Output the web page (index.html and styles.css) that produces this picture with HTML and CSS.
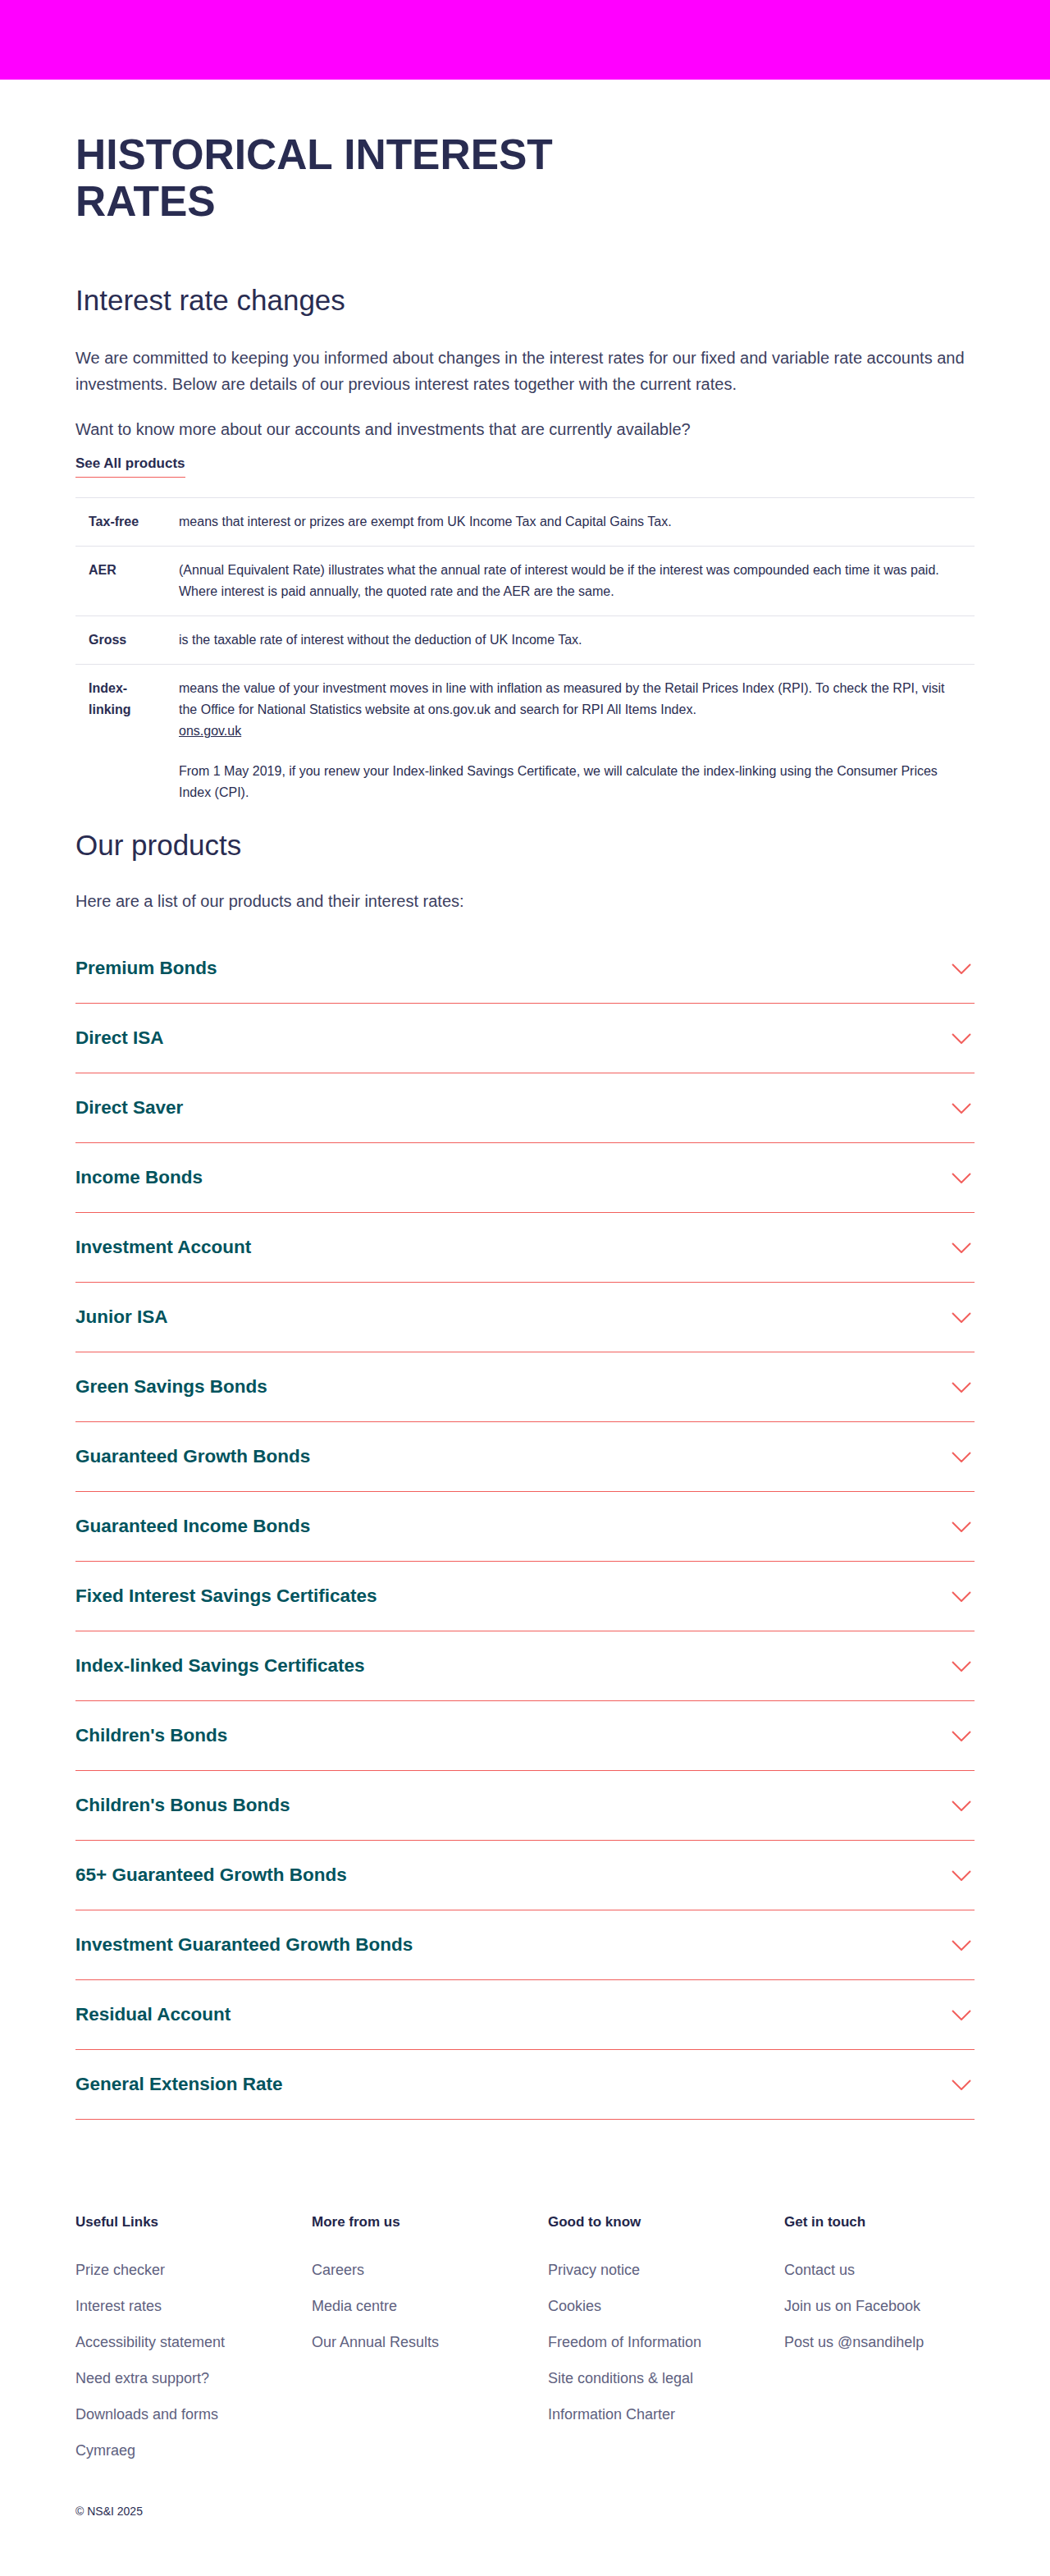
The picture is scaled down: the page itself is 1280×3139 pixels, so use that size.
FILE: index.html
```html
<!DOCTYPE html>
<html lang="en">
<head>
<meta charset="utf-8">
<title>Historical interest rates</title>
<link rel="stylesheet" href="styles.css">
</head>
<body>
<header class="topbar"></header>
<main class="wrap">
  <h1 class="page-title">HISTORICAL INTEREST RATES</h1>

  <h2 class="section-title first">Interest rate changes</h2>
  <p class="lead">We are committed to keeping you informed about changes in the interest rates for our fixed and variable rate accounts and investments. Below are details of our previous interest rates together with the current rates.</p>
  <p class="lead">Want to know more about our accounts and investments that are currently available?</p>
  <a class="cta" href="#">See All products</a>

  <table class="defs">
    <tbody>
      <tr>
        <th>Tax-free</th>
        <td>means that interest or prizes are exempt from UK Income Tax and Capital Gains Tax.</td>
      </tr>
      <tr>
        <th>AER</th>
        <td>(Annual Equivalent Rate) illustrates what the annual rate of interest would be if the interest was compounded each time it was paid. Where interest is paid annually, the quoted rate and the AER are the same.</td>
      </tr>
      <tr>
        <th>Gross</th>
        <td>is the taxable rate of interest without the deduction of UK Income Tax.</td>
      </tr>
      <tr class="last">
        <th>Index-linking</th>
        <td>
          <p>means the value of your investment moves in line with inflation as measured by the Retail Prices Index (RPI). To check the RPI, visit the Office for National Statistics website at ons.gov.uk and search for RPI All Items Index.<br><a href="#">ons.gov.uk</a></p>
          <p>From 1 May 2019, if you renew your Index-linked Savings Certificate, we will calculate the index-linking using the Consumer Prices Index (CPI).</p>
        </td>
      </tr>
    </tbody>
  </table>

  <h2 class="section-title">Our products</h2>
  <p class="lead intro">Here are a list of our products and their interest rates:</p>

  <ul class="accordion">
    <li><span>Premium Bonds</span><svg viewBox="0 0 24 13" class="chev"><polyline points="1,1 12,12 23,1"/></svg></li>
    <li><span>Direct ISA</span><svg viewBox="0 0 24 13" class="chev"><polyline points="1,1 12,12 23,1"/></svg></li>
    <li><span>Direct Saver</span><svg viewBox="0 0 24 13" class="chev"><polyline points="1,1 12,12 23,1"/></svg></li>
    <li><span>Income Bonds</span><svg viewBox="0 0 24 13" class="chev"><polyline points="1,1 12,12 23,1"/></svg></li>
    <li><span>Investment Account</span><svg viewBox="0 0 24 13" class="chev"><polyline points="1,1 12,12 23,1"/></svg></li>
    <li><span>Junior ISA</span><svg viewBox="0 0 24 13" class="chev"><polyline points="1,1 12,12 23,1"/></svg></li>
    <li><span>Green Savings Bonds</span><svg viewBox="0 0 24 13" class="chev"><polyline points="1,1 12,12 23,1"/></svg></li>
    <li><span>Guaranteed Growth Bonds</span><svg viewBox="0 0 24 13" class="chev"><polyline points="1,1 12,12 23,1"/></svg></li>
    <li><span>Guaranteed Income Bonds</span><svg viewBox="0 0 24 13" class="chev"><polyline points="1,1 12,12 23,1"/></svg></li>
    <li><span>Fixed Interest Savings Certificates</span><svg viewBox="0 0 24 13" class="chev"><polyline points="1,1 12,12 23,1"/></svg></li>
    <li><span>Index-linked Savings Certificates</span><svg viewBox="0 0 24 13" class="chev"><polyline points="1,1 12,12 23,1"/></svg></li>
    <li><span>Children's Bonds</span><svg viewBox="0 0 24 13" class="chev"><polyline points="1,1 12,12 23,1"/></svg></li>
    <li><span>Children's Bonus Bonds</span><svg viewBox="0 0 24 13" class="chev"><polyline points="1,1 12,12 23,1"/></svg></li>
    <li><span>65+ Guaranteed Growth Bonds</span><svg viewBox="0 0 24 13" class="chev"><polyline points="1,1 12,12 23,1"/></svg></li>
    <li><span>Investment Guaranteed Growth Bonds</span><svg viewBox="0 0 24 13" class="chev"><polyline points="1,1 12,12 23,1"/></svg></li>
    <li><span>Residual Account</span><svg viewBox="0 0 24 13" class="chev"><polyline points="1,1 12,12 23,1"/></svg></li>
    <li><span>General Extension Rate</span><svg viewBox="0 0 24 13" class="chev"><polyline points="1,1 12,12 23,1"/></svg></li>
  </ul>
</main>

<footer class="footer">
  <div class="wrap">
    <div class="footer-cols">
      <div class="fcol">
        <h3>Useful Links</h3>
        <a href="#">Prize checker</a>
        <a href="#">Interest rates</a>
        <a href="#">Accessibility statement</a>
        <a href="#">Need extra support?</a>
        <a href="#">Downloads and forms</a>
        <a href="#">Cymraeg</a>
      </div>
      <div class="fcol">
        <h3>More from us</h3>
        <a href="#">Careers</a>
        <a href="#">Media centre</a>
        <a href="#">Our Annual Results</a>
      </div>
      <div class="fcol">
        <h3>Good to know</h3>
        <a href="#">Privacy notice</a>
        <a href="#">Cookies</a>
        <a href="#">Freedom of Information</a>
        <a href="#">Site conditions &amp; legal</a>
        <a href="#">Information Charter</a>
      </div>
      <div class="fcol">
        <h3>Get in touch</h3>
        <a href="#">Contact us</a>
        <a href="#">Join us on Facebook</a>
        <a href="#">Post us @nsandihelp</a>
      </div>
    </div>
    <p class="copy">© NS&amp;I 2025</p>
  </div>
</footer>
</body>
</html>
```

FILE: styles.css
```css
* { box-sizing: border-box; }

body {
  margin: 0;
  font-family: "Liberation Sans", Arial, sans-serif;
  color: #2a2d52;
  background: #ffffff;
}

.topbar {
  height: 97px;
  background: #ff00ff;
}

.wrap {
  width: 1096px;
  margin: 0 auto;
}

.page-title {
  max-width: 620px;
  margin: 63px 0 0;
  font-size: 51.5px;
  line-height: 57px;
  font-weight: 700;
  color: #292c51;
}

.section-title {
  margin: 14px 0 0;
  font-size: 35px;
  line-height: 42px;
  font-weight: 400;
  color: #292c51;
}

.section-title.first {
  margin-top: 71px;
}

.lead {
  margin: 0;
  font-size: 20px;
  line-height: 32px;
  color: #3b3e5f;
}

.section-title.first + .lead {
  margin-top: 33px;
}

.lead + .lead {
  margin-top: 23px;
}

.cta {
  display: inline-block;
  margin-top: 14px;
  padding-bottom: 4px;
  font-size: 17px;
  line-height: 24px;
  font-weight: 700;
  color: #292c51;
  text-decoration: none;
  border-bottom: 1px solid #f25f5c;
}

.defs {
  width: 100%;
  margin-top: 24px;
  border-collapse: collapse;
  font-size: 16px;
  line-height: 26px;
  color: #2a2d52;
}

.defs tr {
  border-top: 1px solid #e3e3ea;
}

.defs th,
.defs td {
  padding: 16px;
  vertical-align: top;
  text-align: left;
}

.defs th {
  width: 110px;
  font-weight: 700;
}

.defs td p {
  margin: 0;
}

.defs td p + p {
  margin-top: 23px;
}

.defs a {
  color: #2a2d52;
  text-decoration: underline;
}

.intro {
  margin-top: 31px;
}

.accordion {
  list-style: none;
  margin: 24px 0 0;
  padding: 0;
}

.accordion li {
  display: flex;
  align-items: center;
  justify-content: space-between;
  height: 85px;
  border-bottom: 1px solid #f25f5c;
  padding-right: 4px;
}

.accordion span {
  font-size: 22.5px;
  line-height: 30px;
  font-weight: 700;
  color: #00535d;
}

.chev {
  width: 24px;
  height: 13px;
  fill: none;
  stroke: #f25f5c;
  stroke-width: 2;
}

.footer {
  padding: 113px 0 68px;
}

.footer-cols {
  display: grid;
  grid-template-columns: repeat(4, 232px);
  column-gap: 56px;
}

.fcol {
  display: flex;
  flex-direction: column;
  align-items: flex-start;
  gap: 20px;
}

.fcol h3 {
  margin: 0 0 14px;
  font-size: 17px;
  line-height: 24px;
  font-weight: 700;
  color: #22254a;
}

.fcol a {
  font-size: 18px;
  line-height: 24px;
  color: #5e6180;
  text-decoration: none;
}

.copy {
  margin: 52px 0 0;
  font-size: 14px;
  line-height: 20px;
  color: #2a2d52;
}
```
